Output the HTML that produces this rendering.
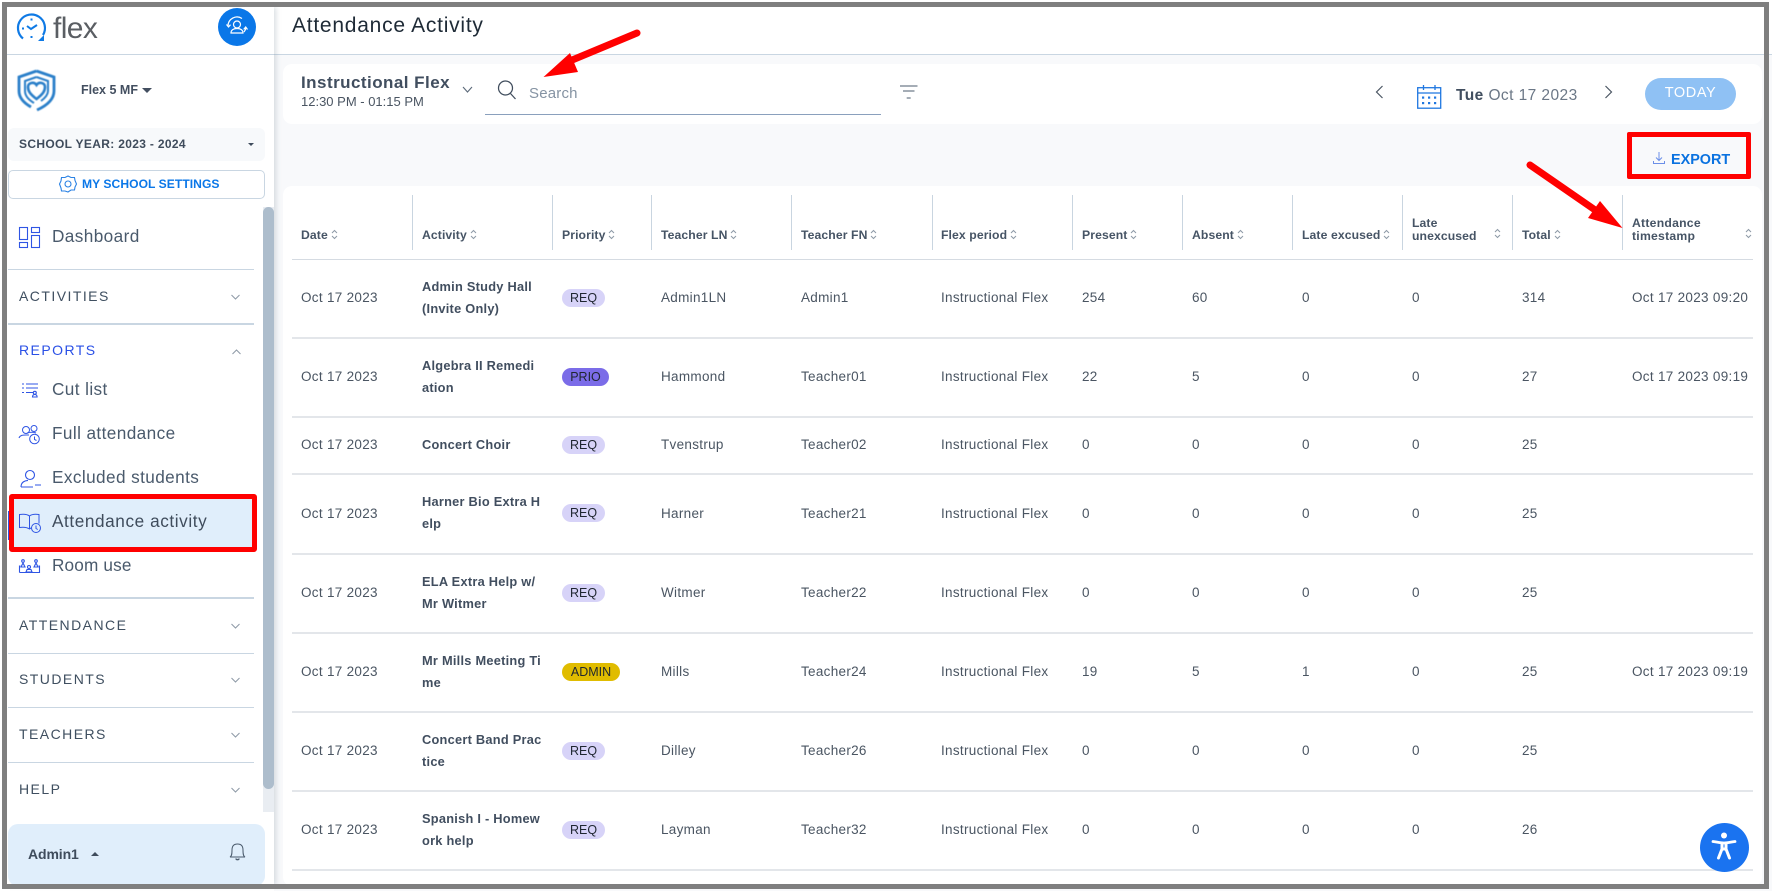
<!DOCTYPE html>
<html lang="en"><head><meta charset="utf-8"><title>Attendance Activity</title>
<style>
*{box-sizing:border-box}
html,body{margin:0;padding:0;background:#fff}
body{width:1772px;height:891px;overflow:hidden;position:relative;font-family:"Liberation Sans",sans-serif;color:#4a5562}
.a{position:absolute;white-space:nowrap}
#main{position:absolute;left:274px;top:54px;width:1498px;height:837px;background:#f8f9fb}
.card{position:absolute;background:#fff;border-radius:9px}
.th{position:absolute;font-weight:bold;font-size:12.2px;color:#465465;line-height:12.5px;white-space:nowrap;letter-spacing:.1px}
.sep{position:absolute;top:195px;height:55px;width:1px;background:#c9d5e0}
.s{display:inline-block;vertical-align:-1px;margin-left:3px}
.row{position:absolute;left:292px;width:1461px;border-bottom:2px solid #e3e6ea;}
.c{position:absolute;top:-1px;height:100%;display:flex;align-items:center;font-size:13.5px;letter-spacing:.3px;white-space:nowrap;color:#4a5562}
.act{font-weight:bold;font-size:12.8px;line-height:22px;color:#414e5f;letter-spacing:.25px}
.b{display:inline-block;height:18px;line-height:18px;border-radius:9px;font-size:12.5px;color:#1f2630;text-align:center;letter-spacing:0}
.req{width:43px;background:#d7d3f8}.prio{width:47px;background:#7b6ce8}.admin{width:58px;background:#e0bc00}
.nav{position:absolute;left:52px;font-size:17.2px;color:#4a5a6c;white-space:nowrap;line-height:20px;letter-spacing:.4px}
.sec{position:absolute;left:19px;font-size:14px;color:#3f4f60;white-space:nowrap;line-height:16px;letter-spacing:1.45px}
.ln{position:absolute;left:8px;width:246px;height:1px;background:#c9d6e2}
svg{position:absolute;overflow:visible}
</style></head><body>

<div id="main"></div>
<div class="a" style="left:274px;top:7px;width:1498px;height:48px;background:#fff;border-bottom:1px solid #c9d6e2"></div>
<div class="a" style="left:292px;top:13px;font-size:21px;line-height:26px;color:#1e2a36;letter-spacing:.75px">Attendance Activity</div>

<!-- toolbar -->
<div class="card" style="left:283px;top:64px;width:1479px;height:60px"></div>
<div class="a" style="left:301px;top:73px;font-size:17px;font-weight:bold;line-height:20px;color:#414e5f;letter-spacing:.46px">Instructional Flex</div>
<div class="a" style="left:301px;top:94px;font-size:13px;line-height:16px;color:#4a5562">12:30 PM - 01:15 PM</div>
<svg style="left:462px;top:86px" width="12" height="8" fill="none" stroke="#5c6a7a" stroke-width="1.1"><path d="M1 1l4.5 5L10 1"/></svg>
<svg style="left:497px;top:80px" width="20" height="20" fill="none" stroke="#3f4c5c" stroke-width="1.25"><circle cx="8.500" cy="8" r="7"/><path d="M13.500 13.500l5 5.500"/></svg>
<div class="a" style="left:529px;top:85px;font-size:15px;line-height:18px;color:#8593a3;letter-spacing:.2px">Search</div>
<div class="a" style="left:485px;top:114px;width:396px;height:1px;background:#8aa0bd"></div>
<svg style="left:900px;top:85px" width="18" height="15" fill="none" stroke="#6f7c8a" stroke-width="1.2"><path d="M0 1h17.500M3 6h11.500M6.700 13h4"/></svg>

<svg style="left:1375px;top:85px" width="9" height="15" fill="none" stroke="#4a5562" stroke-width="1.2"><path d="M7.500 1L1.500 7l6 6"/></svg>
<svg style="left:1417px;top:84px" width="25" height="25" fill="none" stroke="#1f77e0" stroke-width="1.3"><rect x=".7" y="3.700" width="23" height="20.500"/><path d="M.7 9h23M6.500 1v5M18 1v5"/><g stroke="none" fill="#1f77e0"><rect x="5" y="12.500" width="2.200" height="2.200"/><rect x="11" y="12.500" width="2.200" height="2.200"/><rect x="17" y="12.500" width="2.200" height="2.200"/><rect x="5" y="18" width="2.200" height="2.200"/><rect x="11" y="18" width="2.200" height="2.200"/><rect x="17" y="18" width="2.200" height="2.200"/></g></svg>
<div class="a" style="left:1456px;top:86px;font-size:15.5px;line-height:20px;color:#6b7786;letter-spacing:.43px"><b style="color:#414e5f">Tue</b> Oct 17 2023</div>
<svg style="left:1604px;top:85px" width="9" height="15" fill="none" stroke="#4a5562" stroke-width="1.2"><path d="M1.500 1l6 6-6 6"/></svg>
<div class="a" style="left:1645px;top:78px;width:91px;height:32px;border-radius:16px;background:#8fc1f4;color:#fff;font-size:14.5px;line-height:31px;text-align:center;letter-spacing:.6px;font-weight:500">TODAY</div>

<!-- export -->
<svg style="left:1653px;top:152px" width="13" height="13" fill="none" stroke="#6b8fe8" stroke-width="1"><path d="M6 0v8M3 5.500l3 3 3-3M.5 9v2.500h11V9"/></svg>
<div class="a" style="left:1671px;top:151px;font-size:14.4px;line-height:18px;color:#0a72e0;font-weight:bold">EXPORT</div>
<div class="a" style="left:1627px;top:132px;width:124px;height:47px;border:5px solid #f00;border-radius:2px"></div>

<!-- table -->
<div class="card" style="left:283px;top:186px;width:1479px;height:700px"></div>
<div class="sep" style="left:412px"></div><div class="sep" style="left:552px"></div><div class="sep" style="left:651px"></div><div class="sep" style="left:791px"></div><div class="sep" style="left:932px"></div><div class="sep" style="left:1072px"></div><div class="sep" style="left:1182px"></div><div class="sep" style="left:1292px"></div><div class="sep" style="left:1402px"></div><div class="sep" style="left:1512px"></div><div class="sep" style="left:1622px"></div>
<svg width="0" height="0"><defs><symbol id="so" viewBox="0 0 7 11"><path d="M1 4l2.500-2.500L6 4M1 7l2.500 2.500L6 7" fill="none" stroke="#8d99a6" stroke-width="1"/></symbol></defs></svg>
<div class="th" style="left:301px;top:229px">Date<svg class="s" style="position:static" width="7" height="11"><use href="#so"/></svg></div>
<div class="th" style="left:422px;top:229px">Activity<svg class="s" style="position:static" width="7" height="11"><use href="#so"/></svg></div>
<div class="th" style="left:562px;top:229px">Priority<svg class="s" style="position:static" width="7" height="11"><use href="#so"/></svg></div>
<div class="th" style="left:661px;top:229px">Teacher LN<svg class="s" style="position:static" width="7" height="11"><use href="#so"/></svg></div>
<div class="th" style="left:801px;top:229px">Teacher FN<svg class="s" style="position:static" width="7" height="11"><use href="#so"/></svg></div>
<div class="th" style="left:941px;top:229px">Flex period<svg class="s" style="position:static" width="7" height="11"><use href="#so"/></svg></div>
<div class="th" style="left:1082px;top:229px">Present<svg class="s" style="position:static" width="7" height="11"><use href="#so"/></svg></div>
<div class="th" style="left:1192px;top:229px">Absent<svg class="s" style="position:static" width="7" height="11"><use href="#so"/></svg></div>
<div class="th" style="left:1302px;top:229px">Late excused<svg class="s" style="position:static" width="7" height="11"><use href="#so"/></svg></div>
<div class="th" style="left:1412px;top:217px">Late<br>unexcused</div>
<svg style="left:1494px;top:228px" width="7" height="11"><use href="#so"/></svg>
<div class="th" style="left:1522px;top:229px">Total<svg class="s" style="position:static" width="7" height="11"><use href="#so"/></svg></div>
<div class="th" style="left:1632px;top:217px;letter-spacing:.25px">Attendance<br>timestamp</div>
<svg style="left:1745px;top:228px" width="7" height="11"><use href="#so"/></svg>
<div class="a" style="left:292px;top:259px;width:1461px;height:1px;background:#d5dbe2"></div>

<!-- rows -->
<div class="row" style="top:260px;height:79px"><div class="c" style="left:9px">Oct 17 2023</div><div class="c act" style="left:130px">Admin Study Hall<br>(Invite Only)</div><div class="c" style="left:270px"><span class="b req">REQ</span></div><div class="c" style="left:369px">Admin1LN</div><div class="c" style="left:509px">Admin1</div><div class="c" style="left:649px">Instructional Flex</div><div class="c" style="left:790px">254</div><div class="c" style="left:900px">60</div><div class="c" style="left:1010px">0</div><div class="c" style="left:1120px">0</div><div class="c" style="left:1230px">314</div><div class="c" style="left:1340px">Oct 17 2023 09:20</div></div>
<div class="row" style="top:339px;height:79px"><div class="c" style="left:9px">Oct 17 2023</div><div class="c act" style="left:130px">Algebra II Remedi<br>ation</div><div class="c" style="left:270px"><span class="b prio">PRIO</span></div><div class="c" style="left:369px">Hammond</div><div class="c" style="left:509px">Teacher01</div><div class="c" style="left:649px">Instructional Flex</div><div class="c" style="left:790px">22</div><div class="c" style="left:900px">5</div><div class="c" style="left:1010px">0</div><div class="c" style="left:1120px">0</div><div class="c" style="left:1230px">27</div><div class="c" style="left:1340px">Oct 17 2023 09:19</div></div>
<div class="row" style="top:418px;height:57px"><div class="c" style="left:9px">Oct 17 2023</div><div class="c act" style="left:130px">Concert Choir</div><div class="c" style="left:270px"><span class="b req">REQ</span></div><div class="c" style="left:369px">Tvenstrup</div><div class="c" style="left:509px">Teacher02</div><div class="c" style="left:649px">Instructional Flex</div><div class="c" style="left:790px">0</div><div class="c" style="left:900px">0</div><div class="c" style="left:1010px">0</div><div class="c" style="left:1120px">0</div><div class="c" style="left:1230px">25</div></div>
<div class="row" style="top:475px;height:80px"><div class="c" style="left:9px">Oct 17 2023</div><div class="c act" style="left:130px">Harner Bio Extra H<br>elp</div><div class="c" style="left:270px"><span class="b req">REQ</span></div><div class="c" style="left:369px">Harner</div><div class="c" style="left:509px">Teacher21</div><div class="c" style="left:649px">Instructional Flex</div><div class="c" style="left:790px">0</div><div class="c" style="left:900px">0</div><div class="c" style="left:1010px">0</div><div class="c" style="left:1120px">0</div><div class="c" style="left:1230px">25</div></div>
<div class="row" style="top:555px;height:79px"><div class="c" style="left:9px">Oct 17 2023</div><div class="c act" style="left:130px">ELA Extra Help w/<br>Mr Witmer</div><div class="c" style="left:270px"><span class="b req">REQ</span></div><div class="c" style="left:369px">Witmer</div><div class="c" style="left:509px">Teacher22</div><div class="c" style="left:649px">Instructional Flex</div><div class="c" style="left:790px">0</div><div class="c" style="left:900px">0</div><div class="c" style="left:1010px">0</div><div class="c" style="left:1120px">0</div><div class="c" style="left:1230px">25</div></div>
<div class="row" style="top:634px;height:79px"><div class="c" style="left:9px">Oct 17 2023</div><div class="c act" style="left:130px">Mr Mills Meeting Ti<br>me</div><div class="c" style="left:270px"><span class="b admin">ADMIN</span></div><div class="c" style="left:369px">Mills</div><div class="c" style="left:509px">Teacher24</div><div class="c" style="left:649px">Instructional Flex</div><div class="c" style="left:790px">19</div><div class="c" style="left:900px">5</div><div class="c" style="left:1010px">1</div><div class="c" style="left:1120px">0</div><div class="c" style="left:1230px">25</div><div class="c" style="left:1340px">Oct 17 2023 09:19</div></div>
<div class="row" style="top:713px;height:79px"><div class="c" style="left:9px">Oct 17 2023</div><div class="c act" style="left:130px">Concert Band Prac<br>tice</div><div class="c" style="left:270px"><span class="b req">REQ</span></div><div class="c" style="left:369px">Dilley</div><div class="c" style="left:509px">Teacher26</div><div class="c" style="left:649px">Instructional Flex</div><div class="c" style="left:790px">0</div><div class="c" style="left:900px">0</div><div class="c" style="left:1010px">0</div><div class="c" style="left:1120px">0</div><div class="c" style="left:1230px">25</div></div>
<div class="row" style="top:792px;height:79px"><div class="c" style="left:9px">Oct 17 2023</div><div class="c act" style="left:130px">Spanish I - Homew<br>ork help</div><div class="c" style="left:270px"><span class="b req">REQ</span></div><div class="c" style="left:369px">Layman</div><div class="c" style="left:509px">Teacher32</div><div class="c" style="left:649px">Instructional Flex</div><div class="c" style="left:790px">0</div><div class="c" style="left:900px">0</div><div class="c" style="left:1010px">0</div><div class="c" style="left:1120px">0</div><div class="c" style="left:1230px">26</div></div>

<!-- sidebar -->
<div class="a" style="left:7px;top:7px;width:267px;height:878px;background:#fff;box-shadow:2px 0 5px rgba(120,135,150,.28)"></div>
<div class="a" style="left:7px;top:54px;width:267px;height:1px;background:#c9d6e2"></div>
<svg style="left:17px;top:14px" width="29" height="28" fill="none" stroke="#0f7ae5" stroke-width="2.200"><path d="M6 24.500A13.500 13.500 0 1 1 26 21"/><path d="M10 12l4 3 6-4" stroke-width="2"/><path d="M14.500 4.500v2M5 14.500h2M14.500 24v-2" stroke-width="2"/><path d="M21 27h6v-6z" fill="#0f7ae5" stroke="none"/></svg>
<div class="a" style="left:53px;top:10px;font-size:30px;line-height:38px;color:#5a5e63;letter-spacing:-.6px">flex</div>
<div class="a" style="left:218px;top:8px;width:38px;height:38px;border-radius:50%;background:#0a77e8"></div>
<svg style="left:226px;top:16px" width="22" height="22" fill="none" stroke="#fff" stroke-width="1.200"><circle cx="11" cy="8.500" r="3.500"/><path d="M5 17c0-3 2.500-4.500 6-4.500s6 1.500 6 4.500zM2 10A9 9 0 0 1 16 2.500M20 11.500A9 9 0 0 1 18 16"/><path d="M.5 8.500L2.500 11l2-2.300M21.500 13.500l-1.800-2.500-2 2.400"/></svg>
<svg style="left:17px;top:69px;filter:blur(.4px)" width="40" height="43" fill="none" stroke="#2a7fc9" stroke-width="2.800"><path d="M19.500 2L37 8v14c0 8-6 14-17 19M19.500 2L2 8v14c0 7 5 12 12 16"/><path d="M19.500 8L8 12v10c0 5 4 9 9 12M19.500 8L31 12v10c0 4-3 7-7 10" stroke-width="2"/><path d="M19.500 30C13 25 11 22 11 18 11 13.500 17 12.500 19.500 16 22 12.500 28 13.500 28 18 28 22 26 25 19.500 30z" stroke-width="2.600"/></svg>
<div class="a" style="left:81px;top:82px;font-size:12.5px;line-height:16px;color:#434f60;font-weight:bold;letter-spacing:0">Flex 5 MF</div>
<div class="a" style="left:142px;top:88px;border:5px solid transparent;border-top:5px solid #434f60;border-bottom:0"></div>
<div class="a" style="left:8px;top:128px;width:257px;height:33px;background:#f7f9fb;border-radius:6px"></div>
<div class="a" style="left:19px;top:136px;font-size:12px;line-height:16px;font-weight:bold;color:#3f4c5c;letter-spacing:.33px">SCHOOL YEAR: 2023 - 2024</div>
<div class="a" style="left:248px;top:143px;border:3px solid transparent;border-top:3px solid #3f4c5c;border-bottom:0"></div>
<div class="a" style="left:8px;top:170px;width:257px;height:29px;border:1px solid #c9d6e2;border-radius:5px;background:#fff"></div>
<svg style="left:59px;top:175px" width="18" height="18" fill="none" stroke="#2a82e4" stroke-width="1.100"><path d="M9 1l3 1.500 3.500 0 .5 3 1.500 3.500-1.500 3-.5 3-3.500 0L9 17l-3-1-3.500 0-.5-3L.5 9 2 6l.5-3.500 3.500 0z"/><circle cx="9" cy="9" r="3"/></svg>
<div class="a" style="left:82px;top:176px;font-size:12.1px;line-height:16px;font-weight:bold;color:#0a77e8;letter-spacing:.05px">MY SCHOOL SETTINGS</div>
<div class="a" style="left:263px;top:207px;width:11px;height:605px;background:#e9edf2"></div>
<div class="a" style="left:263px;top:207px;width:11px;height:582px;background:#adbdcc;border-radius:6px"></div>

<svg style="left:19px;top:227px" width="22" height="22" fill="none" stroke="#2f55e4" stroke-width="1.100"><rect x=".5" y=".5" width="8" height="12"/><rect x="12.500" y=".5" width="8" height="5"/><rect x=".5" y="15.500" width="8" height="5"/><rect x="12.500" y="8.500" width="8" height="12"/></svg>
<div class="nav" style="top:226px">Dashboard</div>
<div class="ln" style="top:269px"></div>
<div class="sec" style="top:288px">ACTIVITIES</div>
<div class="ln" style="top:323px;height:2px"></div>
<div class="sec" style="top:342px;color:#2a50e6">REPORTS</div>
<svg style="left:232px;top:349px" width="9" height="6" fill="none" stroke="#8d99a6"><path d="M.5 5l4-4 4 4"/></svg>

<svg style="left:22px;top:383px" width="16" height="14" fill="none" stroke="#2f55e4" stroke-width="1.100"><path d="M0 1h2M4 1h12M0 5h2M4 5h12M0 9.500h2M4 9.500h7"/><circle cx="12.800" cy="9.800" r="1.500"/><path d="M10.500 14c0-2 1-2.500 2.300-2.500s2.300.5 2.300 2.500z"/></svg>
<div class="nav" style="top:379px">Cut list</div>
<svg style="left:19px;top:425px" width="22" height="20" fill="none" stroke="#2f55e4" stroke-width="1"><circle cx="7" cy="5" r="3.500"/><circle cx="15" cy="3.500" r="3"/><path d="M0 13c1-3 4-3 7-3h3M8 8c3-1 7-1 9 0"/><circle cx="15.500" cy="14" r="4.800" fill="#fff"/><path d="M15.500 11.500v3l2 1"/></svg>
<div class="nav" style="top:423px">Full attendance</div>
<svg style="left:20px;top:470px" width="22" height="18" fill="none" stroke="#2f55e4" stroke-width="1.100"><circle cx="10" cy="5" r="4.500"/><path d="M1 17c0-5 4-6.500 7-6.500M1 17h12M15 15h6"/></svg>
<div class="nav" style="top:467px">Excluded students</div>

<div class="a" style="left:9px;top:494px;width:248px;height:58px;background:#e0eefb;border:5px solid #f00;border-radius:3px"></div>
<div class="a" style="left:8px;top:511px;width:1px;height:29px;background:#2f55e4"></div>
<svg style="left:19px;top:513px" width="22" height="20" fill="none" stroke="#2f55e4" stroke-width="1"><path d="M10.500 3C8 1 4 1 .5 1.500v13c3.500-.5 7-.5 10 1.500 1-1 2-1.300 3-1.500M10.500 3c2.500-2 6-2 9.500-1.500v9M10.500 3v13"/><circle cx="17" cy="15" r="4.500" fill="#e0eefb"/><path d="M17 12.500v3l1.800 1"/></svg>
<div class="nav" style="top:511px;color:#3f4c5c;letter-spacing:.58px">Attendance activity</div>
<svg style="left:19px;top:559px" width="21" height="14" fill="none" stroke="#2f55e4" stroke-width="1.100"><path d="M.5 13.500h20V7h-1M.5 13.500V7h1"/><path d="M2 8l2-4 2 4zM15 8l2-4 2 4zM7 13l1-2.500h4l1 2.500z"/><circle cx="4" cy="2" r="1.300"/><circle cx="17" cy="2" r="1.300"/><circle cx="10" cy="8" r="1.500"/></svg>
<div class="nav" style="top:555px;letter-spacing:.15px">Room use</div>
<div class="ln" style="top:597px;height:2px"></div>
<div class="sec" style="top:617px">ATTENDANCE</div>
<div class="ln" style="top:653px"></div>
<div class="sec" style="top:671px">STUDENTS</div>
<div class="ln" style="top:707px"></div>
<div class="sec" style="top:726px">TEACHERS</div>
<div class="ln" style="top:762px"></div>
<div class="sec" style="top:781px">HELP</div>
<svg style="left:231px;top:294px" width="9" height="6" fill="none" stroke="#8d99a6"><path d="M.5 1l4 4 4-4"/></svg>
<svg style="left:231px;top:623px" width="9" height="6" fill="none" stroke="#8d99a6"><path d="M.5 1l4 4 4-4"/></svg>
<svg style="left:231px;top:677px" width="9" height="6" fill="none" stroke="#8d99a6"><path d="M.5 1l4 4 4-4"/></svg>
<svg style="left:231px;top:732px" width="9" height="6" fill="none" stroke="#8d99a6"><path d="M.5 1l4 4 4-4"/></svg>
<svg style="left:231px;top:787px" width="9" height="6" fill="none" stroke="#8d99a6"><path d="M.5 1l4 4 4-4"/></svg>

<div class="a" style="left:8px;top:824px;width:257px;height:62px;background:#e0eefb;border-radius:10px"></div>
<div class="a" style="left:28px;top:846px;font-size:14px;line-height:16px;font-weight:bold;color:#3f4c5c;letter-spacing:-.1px">Admin1</div>
<div class="a" style="left:91px;top:852px;border:4px solid transparent;border-bottom:4px solid #3f4c5c;border-top:0"></div>
<svg style="left:229px;top:843px" width="17" height="18" fill="none" stroke="#4a5a6c" stroke-width="1"><path d="M1 14c2-1 2-4 2-7 0-4 2-6 5.500-6S14 3 14 7c0 3 0 6 2 7z"/><path d="M7 15.500c0 1.500 3 1.500 3 0" stroke-width="1.400"/></svg>

<!-- arrows -->
<svg style="left:0;top:0" width="1772" height="891"><path d="M637 33L565 63" stroke="#f00" stroke-width="7" stroke-linecap="round" fill="none"/><path d="M543.500 77L570 53L578 72z" fill="#f00"/><path d="M1530 165L1598 212" stroke="#f00" stroke-width="7" stroke-linecap="round" fill="none"/><path d="M1622.500 228L1600 201L1588 218z" fill="#f00"/></svg>

<!-- a11y -->
<div class="a" style="left:1700px;top:823px;width:49px;height:49px;border-radius:50%;background:#1a73f0"></div>
<svg style="left:1711px;top:830px" width="26" height="35" fill="none" stroke="#fff" stroke-width="3" stroke-linecap="round" stroke-linejoin="round"><circle cx="13" cy="5" r="3" fill="#fff" stroke="none" transform="translate(0,.5)"/><path d="M2 11.500c4 .5 7 1.500 11 1.500s7-1 11-1.500" stroke-width="2.800"/><path d="M11 13v6L7.500 28M15 13v6l3.500 9M11 19h4"/></svg>

<!-- outer frame -->
<div class="a" style="left:2px;top:2px;width:1767px;height:887px;border:5px solid #7f7f7f"></div>
</body></html>
